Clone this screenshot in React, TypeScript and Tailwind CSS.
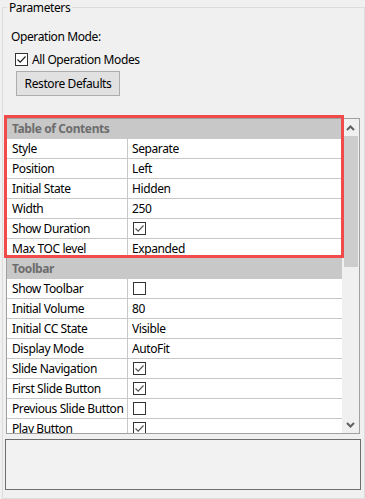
import React from 'react';

type Row = { label: string; value?: string; check?: boolean };
type Category = { title: string; rows: Row[] };

const categories: Category[] = [
  {
    title: 'Table of Contents',
    rows: [
      { label: 'Style', value: 'Separate' },
      { label: 'Position', value: 'Left' },
      { label: 'Initial State', value: 'Hidden' },
      { label: 'Width', value: '250' },
      { label: 'Show Duration', check: true },
      { label: 'Max TOC level', value: 'Expanded' },
    ],
  },
  {
    title: 'Toolbar',
    rows: [
      { label: 'Show Toolbar', check: false },
      { label: 'Initial Volume', value: '80' },
      { label: 'Initial CC State', value: 'Visible' },
      { label: 'Display Mode', value: 'AutoFit' },
      { label: 'Slide Navigation', check: true },
      { label: 'First Slide Button', check: true },
      { label: 'Previous Slide Button', check: false },
      { label: 'Play Button', check: true },
    ],
  },
];

const CheckBox: React.FC<{ checked: boolean; dark?: boolean }> = ({ checked, dark }) => (
  <span className="w-[13px] h-[13px] border border-[#333333] bg-white flex items-center justify-center shrink-0">
    {checked && (
      <svg width="11" height="11" viewBox="0 0 11 11" fill="none">
        <path d="M1.5 5.5 L4.2 8.2 L9.5 2.5" stroke={dark ? '#222222' : '#555555'} strokeWidth="1.2" />
      </svg>
    )}
  </span>
);

const Chevron: React.FC<{ up?: boolean }> = ({ up }) => (
  <svg width="9" height="6" viewBox="0 0 9 6">
    <path d={up ? 'M1 5 L4.5 1.5 L8 5' : 'M1 1 L4.5 4.5 L8 1'} stroke="#606060" strokeWidth="2" fill="none" />
  </svg>
);

const PropertyRow: React.FC<{ row: Row }> = ({ row }) => (
  <div className="flex h-[20px] border-b border-[#c8c8c8] bg-white shrink-0">
    <div className="w-[121px] border-r border-[#c8c8c8] pl-[5px] flex items-center whitespace-nowrap overflow-hidden">{row.label}</div>
    <div className="flex-1 pl-[4px] flex items-center">
      {row.check === undefined ? row.value : <span className="ml-[1px]"><CheckBox checked={row.check} /></span>}
    </div>
  </div>
);

export default function App() {
  return (
    <div
      className="w-[365px] h-[499px] bg-[#f0f0f0] text-[12px] leading-4 tracking-[-0.4px] text-black overflow-hidden pt-[7px] pl-[2px]"
      style={{ fontFamily: '"Noto Sans", "Open Sans", sans-serif' }}
    >
      <div className="relative w-[363px] h-[492px] border border-[#dcdcdc] flex flex-col">
        <span className="absolute left-[4px] top-[-8px] px-[2px] bg-[#f0f0f0]">Parameters</span>

        <div className="ml-[8px] mt-[21px] h-4">Operation Mode:</div>

        <label className="ml-[12px] mt-[6px] h-[17px] flex items-center gap-[4px]">
          <CheckBox checked dark />
          <span>All Operation Modes</span>
        </label>

        <button className="ml-[13px] mt-[3px] w-[104px] h-[25px] bg-[#e1e1e1] border border-[#adadad] flex items-center justify-center">
          Restore Defaults
        </button>

        <div className="relative ml-[3px] mt-[22px] w-[354px] h-[316px] border border-[#a0a0a0] flex bg-[#f0f0f0]">
          <div className="w-[335px] h-full overflow-hidden flex flex-col">
            {categories.map((cat) => (
              <React.Fragment key={cat.title}>
                <div className="h-[20px] shrink-0 bg-[#c8c8c8] pl-[5px] flex items-center font-bold text-[#6d6d6d]">
                  {cat.title}
                </div>
                {cat.rows.map((r) => (
                  <PropertyRow key={r.label} row={r} />
                ))}
              </React.Fragment>
            ))}
          </div>
          <div className="w-[17px] h-full bg-[#f0f0f0] flex flex-col">
            <div className="h-[17px] flex items-center justify-center">
              <Chevron up />
            </div>
            <div className="ml-[2px] w-[14px] h-[131px] bg-[#cdcdcd]" />
            <div className="flex-1" />
            <div className="h-[17px] flex items-center justify-center">
              <Chevron />
            </div>
          </div>
          <div className="absolute left-[-3px] top-[-4px] w-[340px] h-[143px] border-[3px] border-[#f04a4a]" />
        </div>

        <div className="ml-[2px] mt-[5px] w-[356px] h-[51px] border border-[#6d6d6d] bg-[#f2f2f2]" />
      </div>
    </div>
  );
}
